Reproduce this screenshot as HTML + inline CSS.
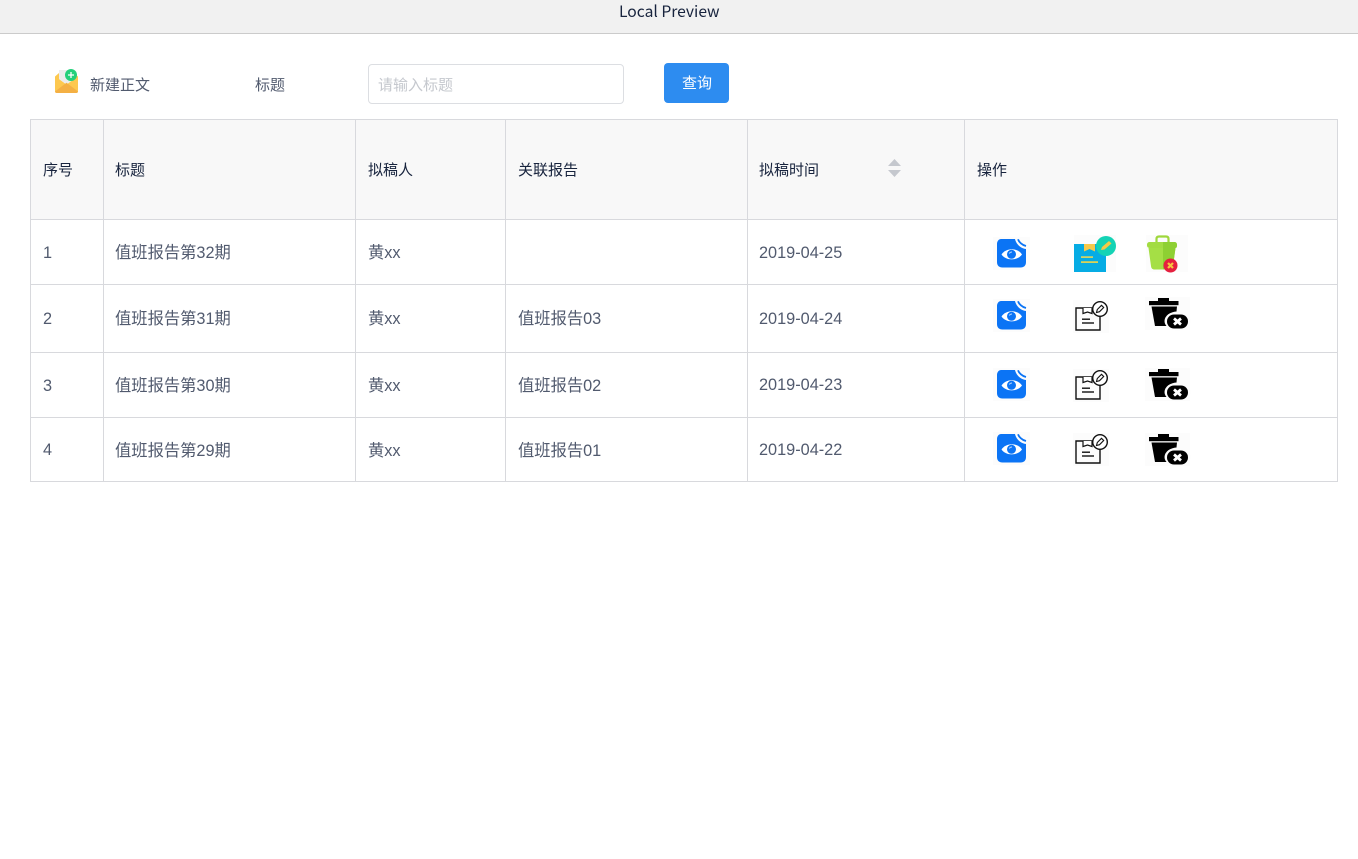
<!DOCTYPE html>
<html lang="zh">
<head>
<meta charset="utf-8">
<title>Local Preview</title>
<style>
html,body{margin:0;padding:0;background:#fff;}
body{width:1358px;height:859px;position:relative;overflow:hidden;font-family:"Liberation Sans","Noto Sans CJK SC",sans-serif;color:#515a6e;}
.t{position:absolute;white-space:nowrap;line-height:20px;}
.h{font-family:"Noto Sans CJK SC",sans-serif;font-size:15px;color:#17233d;}
.b{font-size:16.3px;color:#515a6e;}
.l{position:absolute;background:#d8d9dd;}
svg{position:absolute;overflow:visible;}
</style>
</head>
<body>
<svg width="0" height="0" style="position:absolute">
<defs>
<g id="view">
<rect x="-4" y="-2" width="37" height="33" fill="#fcfcfc"/>
<path d="M4 0H18C19 5 24 9.500 29 10V23C29 26.500 27 28.500 23.500 28.500H5.500C2 28.500 0 26.500 0 23V5C0 2 2 0 4 0Z" fill="#0b74f5"/>
<path d="M21 0.300C22 3 25 6 29 7" fill="none" stroke="#0b74f5" stroke-width="1.800"/>
<path d="M4.500 15.500C9 8.500 20.500 8.500 25 15.500C20.500 22 9 22 4.500 15.500Z" fill="#fff"/>
<circle cx="14.500" cy="15.300" r="4.500" fill="#0b74f5"/>
<path d="M12.300 14.500C12.800 13.500 14 13 15 13" stroke="#fff" stroke-width="1" fill="none" opacity=".7"/>
</g>
<g id="editc">
<rect x="0" y="-1" width="42" height="37" fill="#fcfcfc"/>
<rect x="0" y="8" width="32" height="28" fill="#06ace4"/>
<path d="M10 15.500L15.500 13L21 15.500V8H10Z" fill="#f7c94a"/>
<rect x="7" y="20.300" width="12" height="1.600" fill="#e3d75a"/>
<rect x="7" y="25.300" width="17" height="1.600" fill="#f1d648"/>
<circle cx="32" cy="10" r="10" fill="#14d3b5"/>
<path d="M27 14L28 11L35 5L37.500 7.500L30.500 13.500Z" fill="#f5c945"/>
</g>
<g id="trashc">
<rect x="-1" y="-1" width="42" height="37" fill="#fcfcfc"/>
<path d="M9.500 7V3C9.500 1 10.500 0.500 12 0.500H19C20.500 0.500 21.500 1 21.500 3V7" fill="none" stroke="#9fd83c" stroke-width="2.200"/>
<rect x="0" y="6" width="30" height="6" rx="2.500" fill="#a2dc42"/>
<path d="M1.500 12H28.500L26 30C25.700 32.500 24.500 33.500 22.500 33.500H7.500C5.500 33.500 4.300 32.500 4 30Z" fill="#a5df45"/>
<path d="M16 6H27.500C29 6 30 7 30 9.500C30 11 29.500 12 28.500 12L26 30C25.700 32.500 24.500 33.500 22.500 33.500H16Z" fill="#8ed033"/>
<circle cx="23.500" cy="29.500" r="7" fill="#e5203f"/>
<path d="M21 27L26 32M26 27L21 32" stroke="#f6c63f" stroke-width="2.200"/>
</g>
<g id="editb">
<rect x="-2" y="-1" width="36" height="33" fill="#fcfcfc"/>
<path d="M1 7H25V29H1Z" fill="#fcfcfc" stroke="#111" stroke-width="1.400"/>
<path d="M8 7V12.500L12.500 11L17 12.500V7" fill="#fff" stroke="#111" stroke-width="1.200"/>
<rect x="7" y="17.500" width="8" height="1.400" fill="#111"/>
<rect x="7" y="21.300" width="12" height="1.400" fill="#111"/>
<circle cx="25" cy="8" r="7.300" fill="#fff" stroke="#111" stroke-width="1.400"/>
<path d="M21.500 11.500L22.300 8.500L26.500 4.300L28.700 6.500L24.500 10.700Z" fill="#fff" stroke="#111" stroke-width="1.100"/>
</g>
<g id="trashb">
<rect x="-4" y="-1" width="45" height="33" fill="#fcfcfc"/>
<rect x="9" y="0" width="11" height="3.500" fill="#000"/>
<rect x="0" y="3" width="29.500" height="4.200" fill="#000"/>
<path d="M2.500 8.500H28L26 28H6Z" fill="#000"/>
<ellipse cx="28.500" cy="23" rx="13" ry="9.500" fill="#fcfcfc"/>
<rect x="18" y="16.500" width="21" height="14" rx="7" fill="#000"/>
<path d="M25 20.500L32 26.500M32 20.500L25 26.500" stroke="#fff" stroke-width="2.800"/>
</g>
</defs>
</svg>

<div style="position:absolute;left:0;top:0;width:1358px;height:33px;background:#f1f1f1;border-bottom:1px solid #cbcbcb;"></div>
<div class="t" style="left:619px;top:1px;font-family:'Noto Sans CJK SC',sans-serif;font-size:15.650px;color:#17233d;">Local Preview</div>

<svg width="24" height="24" style="left:55px;top:69px">
<path d="M0 7.500L4 4V10L11.500 15.500L19 10V4L23 7.500V22C23 23.200 22.200 24 21 24H2C0.800 24 0 23.200 0 22Z" fill="#fdc84f"/>
<path d="M4 1H19V10L11.500 15.500L4 10Z" fill="#ececec"/>
<path d="M0 22.500L11.500 13.800L23 22.500C23 23.400 22.200 24 21 24H2C0.800 24 0 23.400 0 22.500Z" fill="#f4b044"/>
<circle cx="16" cy="6" r="6" fill="#24d07b"/>
<path d="M16 3V9M13 6H19" stroke="#fff" stroke-width="1.300"/>
</svg>
<div class="t" style="left:90px;top:75px;font-family:'Noto Sans CJK SC',sans-serif;font-size:15px;">新建正文</div>
<div class="t" style="left:255px;top:75px;font-family:'Noto Sans CJK SC',sans-serif;font-size:15px;">标题</div>
<div style="position:absolute;left:368px;top:64px;width:254px;height:38px;border:1px solid #dcdee2;border-radius:4px;"></div>
<div class="t" style="left:378px;top:75px;font-family:'Noto Sans CJK SC',sans-serif;font-size:15px;color:#c5c8ce;">请输入标题</div>
<div style="position:absolute;left:664px;top:63px;width:65px;height:40px;background:#2d8cf0;border-radius:4px;"></div>
<div class="t" style="left:682px;top:73px;font-family:'Noto Sans CJK SC',sans-serif;font-size:15px;color:#fff;">查询</div>

<div style="position:absolute;left:31px;top:120px;width:1306px;height:99px;background:#f8f8f8;"></div>
<div class="l" style="left:30px;top:119px;width:1308px;height:1px;"></div>
<div class="l" style="left:30px;top:219px;width:1308px;height:1px;"></div>
<div class="l" style="left:30px;top:284px;width:1308px;height:1px;"></div>
<div class="l" style="left:30px;top:352px;width:1308px;height:1px;"></div>
<div class="l" style="left:30px;top:417px;width:1308px;height:1px;"></div>
<div class="l" style="left:30px;top:481px;width:1308px;height:1px;"></div>
<div class="l" style="left:30px;top:119px;width:1px;height:363px;"></div>
<div class="l" style="left:103px;top:119px;width:1px;height:363px;"></div>
<div class="l" style="left:355px;top:119px;width:1px;height:363px;"></div>
<div class="l" style="left:505px;top:119px;width:1px;height:363px;"></div>
<div class="l" style="left:747px;top:119px;width:1px;height:363px;"></div>
<div class="l" style="left:964px;top:119px;width:1px;height:363px;"></div>
<div class="l" style="left:1337px;top:119px;width:1px;height:363px;"></div>

<div class="t h" style="left:43px;top:160px;">序号</div>
<div class="t h" style="left:115px;top:160px;">标题</div>
<div class="t h" style="left:368px;top:160px;">拟稿人</div>
<div class="t h" style="left:518px;top:160px;">关联报告</div>
<div class="t h" style="left:759px;top:160px;">拟稿时间</div>
<div class="t h" style="left:977px;top:160px;">操作</div>
<svg width="14" height="18" style="left:888px;top:159px">
<path d="M0 7L6.500 0L13 7Z" fill="#c5c8ce"/>
<path d="M0 11H13L6.500 18Z" fill="#c5c8ce"/>
</svg>

<div class="t b" style="left:43px;top:243px;">1</div>
<div class="t b" style="left:115px;top:243px;">值班报告第32期</div>
<div class="t b" style="left:368px;top:243px;">黄xx</div>
<div class="t b" style="left:759px;top:243px;">2019-04-25</div>

<div class="t b" style="left:43px;top:309px;">2</div>
<div class="t b" style="left:115px;top:309px;">值班报告第31期</div>
<div class="t b" style="left:368px;top:309px;">黄xx</div>
<div class="t b" style="left:518px;top:309px;">值班报告03</div>
<div class="t b" style="left:759px;top:309px;">2019-04-24</div>

<div class="t b" style="left:43px;top:376px;">3</div>
<div class="t b" style="left:115px;top:376px;">值班报告第30期</div>
<div class="t b" style="left:368px;top:376px;">黄xx</div>
<div class="t b" style="left:518px;top:376px;">值班报告02</div>
<div class="t b" style="left:759px;top:375px;">2019-04-23</div>

<div class="t b" style="left:43px;top:440px;">4</div>
<div class="t b" style="left:115px;top:441px;">值班报告第29期</div>
<div class="t b" style="left:368px;top:441px;">黄xx</div>
<div class="t b" style="left:518px;top:441px;">值班报告01</div>
<div class="t b" style="left:759px;top:440px;">2019-04-22</div>

<svg width="30" height="29" style="left:997px;top:239px"><use href="#view"/></svg>
<svg width="44" height="36" style="left:1074px;top:236px"><use href="#editc"/></svg>
<svg width="34" height="36" style="left:1147px;top:236px"><use href="#trashc"/></svg>

<svg width="30" height="29" style="left:997px;top:301px"><use href="#view"/></svg>
<svg width="34" height="32" style="left:1075px;top:301px"><use href="#editb"/></svg>
<svg width="40" height="32" style="left:1149px;top:298px"><use href="#trashb"/></svg>

<svg width="30" height="29" style="left:997px;top:370px"><use href="#view"/></svg>
<svg width="34" height="32" style="left:1075px;top:370px"><use href="#editb"/></svg>
<svg width="40" height="32" style="left:1149px;top:369px"><use href="#trashb"/></svg>

<svg width="30" height="29" style="left:997px;top:434px"><use href="#view"/></svg>
<svg width="34" height="32" style="left:1075px;top:434px"><use href="#editb"/></svg>
<svg width="40" height="32" style="left:1149px;top:434px"><use href="#trashb"/></svg>
</body>
</html>
